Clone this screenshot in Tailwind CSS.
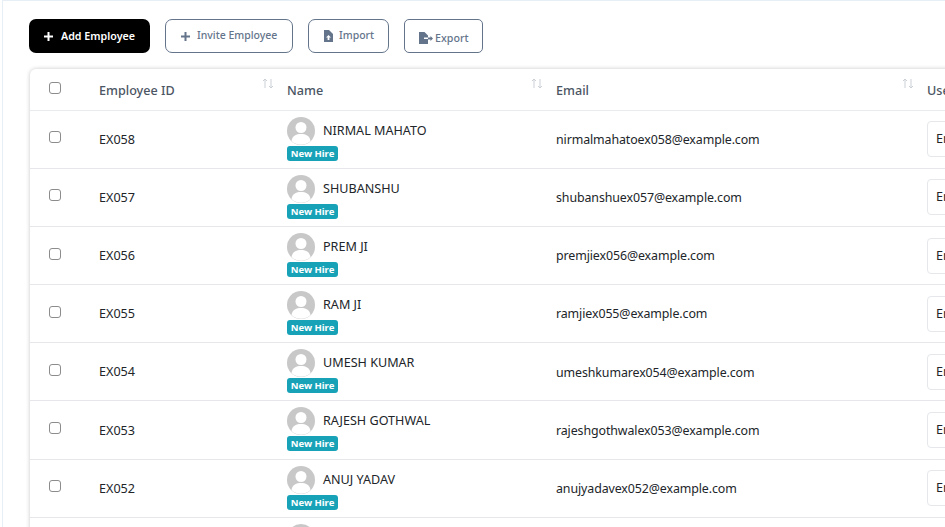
<!DOCTYPE html>
<html lang="en">
<head>
<meta charset="UTF-8">
<title>Employees</title>
<script src="https://cdn.jsdelivr.net/npm/@tailwindcss/browser@4"></script>
</head>
<body class="h-[527px] w-[945px] overflow-hidden bg-white font-['Noto_Sans',sans-serif] text-[12.6px] text-[#212529]">
<div class="ml-[2px] h-[527px] border-l border-t border-[#e8eef6] bg-white pl-[26px] pt-[18px] overflow-hidden">
  <!-- toolbar -->
  <div class="flex gap-[15px] h-[34px]">
    <button class="flex items-center w-[121px] h-[34px] pl-[14px] gap-[7px] bg-black text-white rounded-[7px] text-[10.700px] font-semibold">
      <svg class="w-[11px] h-[11px]" viewBox="0 0 11 11"><path d="M5.500 1v9M1 5.500h9" stroke="#fff" stroke-width="2"/></svg>Add Employee
    </button>
    <button class="flex items-center w-[128px] h-[34px] pl-[14px] gap-[6px] border border-[#64748b] text-[#64748b] rounded-[7px] text-[10.500px] font-medium">
      <svg class="w-[11px] h-[11px]" viewBox="0 0 11 11"><path d="M5.500 1v9M1 5.500h9" stroke="#64748b" stroke-width="2"/></svg>Invite Employee
    </button>
    <button class="flex items-center w-[81px] h-[34px] pl-[14px] gap-[6px] border border-[#64748b] text-[#64748b] rounded-[7px] text-[10.500px] font-medium">
      <svg class="w-[10px] h-[12px]" viewBox="0 0 10 12"><path fill="#64748b" d="M1 0h5l4 4v8H1zM5.500 5 3 7.600h1.600V10h1.800V7.600H8z" fill-rule="evenodd"/></svg>Import
    </button>
    <button class="flex items-center w-[79px] h-[34px] pl-[14px] pt-[4px] gap-[2px] border border-[#64748b] text-[#64748b] rounded-[5px] text-[10.700px] font-medium">
      <svg class="w-[14px] h-[12px]" viewBox="0 0 14 12"><path fill="#64748b" d="M0 0h5.500l3.500 3.500V5.500H5v1.500h4V12H0zM9 5.500h2.500V4L14 6.500 11.500 9V7.500H9z"/></svg>Export
    </button>
  </div>
  <!-- table -->
  <div class="mt-[16px] ml-[1px] w-[1100px] bg-white rounded-t-md shadow-[0_0_4px_rgba(0,0,0,0.22)]">
    <table class="table-fixed w-full border-collapse">
      <colgroup><col class="w-[69px]"><col class="w-[188px]"><col class="w-[269px]"><col class="w-[371px]"><col></colgroup>
      <thead>
        <tr class="h-[41.300px] text-left text-[#4b5563] font-medium border-b border-[#e9ecef]">
          <th class="pl-[19px] font-normal"><input type="checkbox" class="block appearance-none bg-white border-[1.500px] border-[#8c8c8c] rounded-[3px] w-[12px] h-[12px] -mt-[2px]"></th>
          <th class="relative font-medium pt-[4px]">Employee ID<svg class="absolute right-[13px] top-[9px] w-[12px] h-[11px]" viewBox="0 0 12 11"><path d="M3 10V1M1 3l2-2 2 2M9 1v9M7 8l2 2 2-2" fill="none" stroke="#cbd0d6"/></svg></th>
          <th class="relative font-medium pt-[4px]">Name<svg class="absolute right-[13px] top-[9px] w-[12px] h-[11px]" viewBox="0 0 12 11"><path d="M3 10V1M1 3l2-2 2 2M9 1v9M7 8l2 2 2-2" fill="none" stroke="#cbd0d6"/></svg></th>
          <th class="relative font-medium pt-[4px]">Email<svg class="absolute right-[13px] top-[9px] w-[12px] h-[11px]" viewBox="0 0 12 11"><path d="M3 10V1M1 3l2-2 2 2M9 1v9M7 8l2 2 2-2" fill="none" stroke="#cbd0d6"/></svg></th>
          <th class="font-medium pt-[4px]">User Type</th>
        </tr>
      </thead>
      <tbody id="rows"></tbody>
    </table>
  </div>
</div>
<script>
  // row data for the table
  const people = [
    ["EX058", "NIRMAL MAHATO", "nirmalmahatoex058@example.com"],
    ["EX057", "SHUBANSHU", "shubanshuex057@example.com"],
    ["EX056", "PREM JI", "premjiex056@example.com"],
    ["EX055", "RAM JI", "ramjiex055@example.com"],
    ["EX054", "UMESH KUMAR", "umeshkumarex054@example.com"],
    ["EX053", "RAJESH GOTHWAL", "rajeshgothwalex053@example.com"],
    ["EX052", "ANUJ YADAV", "anujyadavex052@example.com"],
    ["EX051", "", ""]
  ];
  document.getElementById("rows").innerHTML = people.map(p => `
    <tr class="h-[58.140px] border-b border-[#e5e7eb]">
      <td class="pl-[19px]"><input type="checkbox" class="block appearance-none bg-white border-[1.500px] border-[#8c8c8c] rounded-[3px] w-[12px] h-[12px] -mt-[4px]"></td>
      <td class="pt-[2px]">${p[0]}</td>
      <td class="align-top pt-[6px]">
        <div class="flex items-center gap-[8px] h-[28px]">
          <svg class="w-[28px] h-[28px]" viewBox="0 0 28 28"><circle cx="14" cy="14" r="14" fill="#c8c8c8"/><circle cx="14" cy="10.500" r="5.500" fill="#fff"/><path d="M4.500 24c1-5.500 5-7 9.500-7s8.500 1.500 9.500 7a14 14 0 0 1-19 0z" fill="#fff"/></svg>
          <span class="mt-[1px]">${p[1]}</span>
        </div>
        <span class="block mt-[1px] w-[51px] h-[15px] leading-[15px] rounded-[3px] bg-[#17a2b8] text-white text-[9.500px] font-bold text-center">New Hire</span>
      </td>
      <td class="pt-[2px] text-[12.400px] tracking-[-0.1px]">${p[2]}</td>
      <td><div class="w-[120px] h-[36px] leading-[34px] px-[8px] border border-[#e5e7eb] rounded-[4px]">Employee</div></td>
    </tr>`).join("");
</script>
</body>
</html>
